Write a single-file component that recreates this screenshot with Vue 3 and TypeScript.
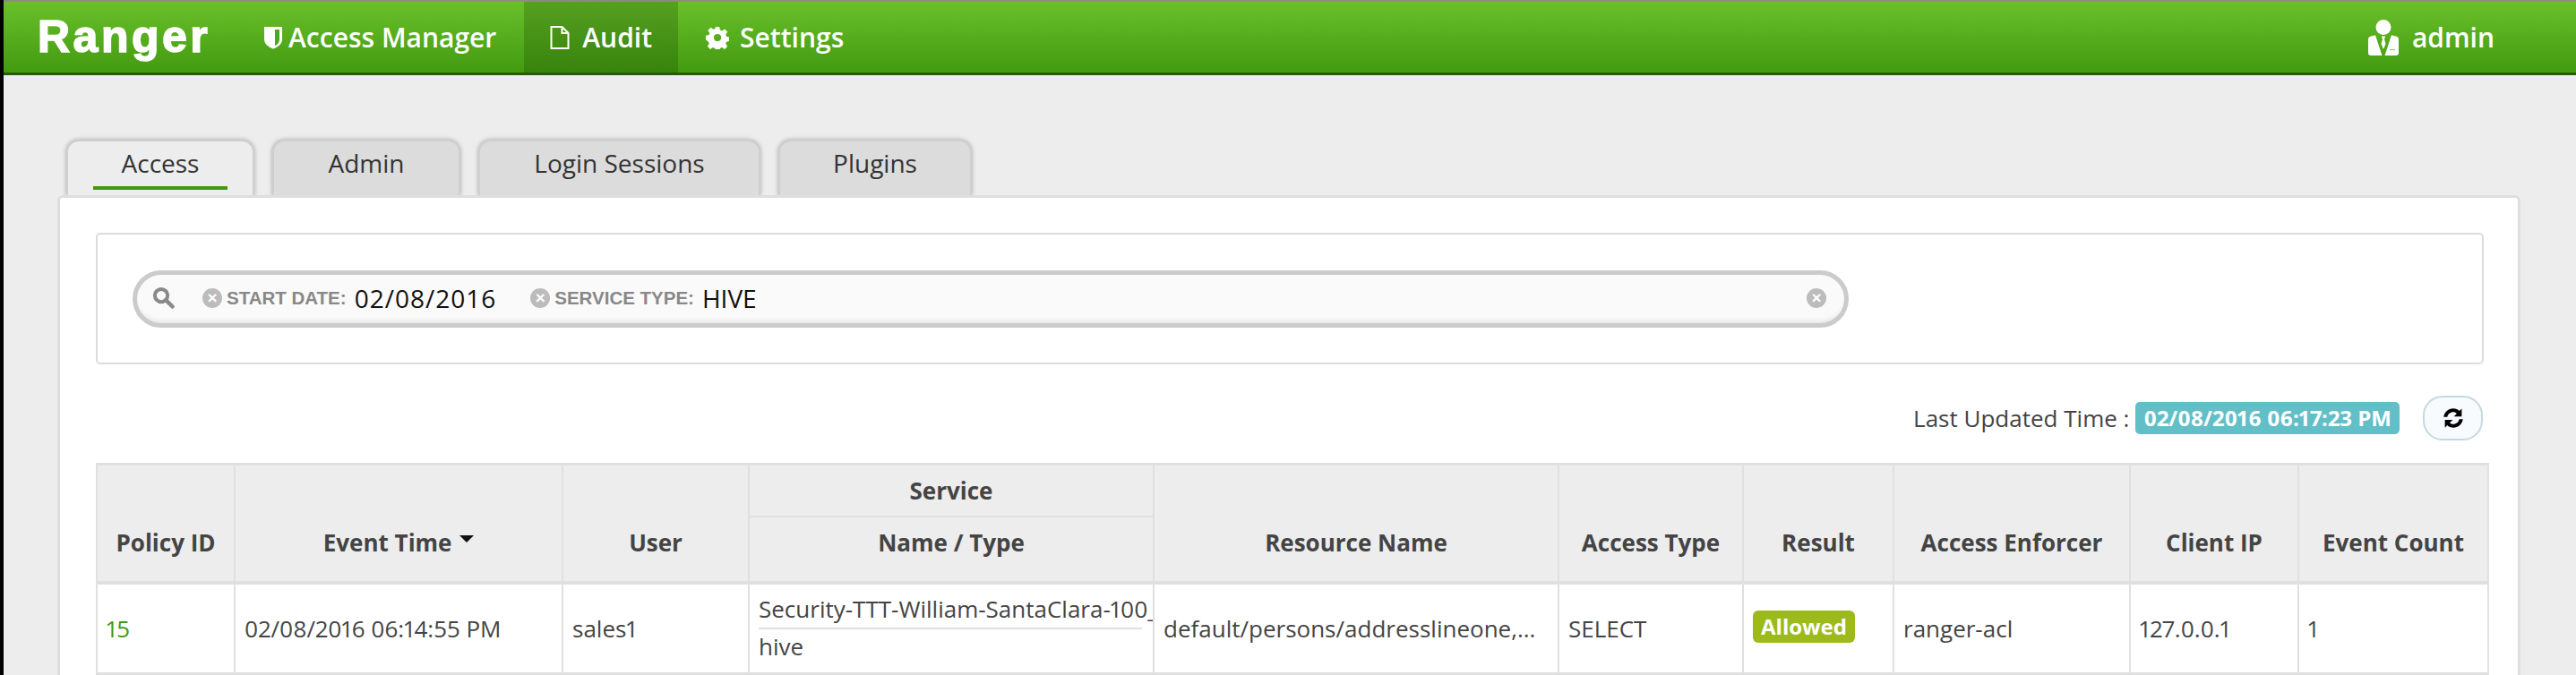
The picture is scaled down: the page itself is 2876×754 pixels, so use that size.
<script setup lang="ts">
const tabs = ['Access', 'Admin', 'Login Sessions', 'Plugins']
</script>

<template>
  <div class="page">
    <nav class="navbar">
      <span class="brand">Ranger</span>
      <a class="item manager">
        <svg class="ic-shield" viewBox="0 0 22 26"><path d="M1 1h20v14c0 5-4.500 8.500-10 10.500C5.500 23.500 1 20 1 15z" fill="#fff"/><path d="M13 4h5v11c0 3.500-2.200 5.800-5 7.300z" fill="#4fa81c"/></svg>
        <span>Access Manager</span>
      </a>
      <a class="item active">
        <svg class="ic-file" viewBox="0 0 22 26"><path d="M1.500 1h12l7 7v17h-19z M13.500 1v7h7" fill="none" stroke="#fff" stroke-width="2"/></svg>
        <span>Audit</span>
      </a>
      <a class="item settings">
        <svg class="ic-gear" viewBox="0 0 24 24"><path fill="#fff" fill-rule="evenodd" d="M10 1h4l.7 3.200 2 .9 2.800-1.800 2.800 2.800-1.800 2.800.8 2 3.200.7v4l-3.200.7-.8 2 1.800 2.800-2.800 2.800-2.800-1.800-2 .8-.7 3.200h-4l-.7-3.200-2-.8-2.800 1.800-2.800-2.800 1.800-2.800-.8-2L0 14v-4l3.200-.7.800-2-1.800-2.800L5 1.700l2.800 1.800 2-.8zM12 8.200a3.800 3.800 0 1 0 0 7.600 3.800 3.800 0 0 0 0-7.600z"/></svg>
        <span>Settings</span>
      </a>
      <span class="user">
        <svg class="ic-user" viewBox="0 0 34 40"><circle cx="17" cy="8.500" r="8.500" fill="#fff"/><path fill="#fff" d="M0 22q0-3 3-3.500l5-1.200L15.500 40H3q-3 0-3-3z"/><path fill="#fff" d="M34 22q0-3-3-3.500l-5-1.200L18.500 40H31q3 0 3-3z"/><path fill="#fff" d="M14.700 18.500h4.600l-1.300 3 1.500 5.500-2.500 6-2.500-6 1.500-5.500z"/><rect x="24" y="33" width="6" height="1.200" fill="#8fcf6a"/></svg>
        <span>admin</span>
      </span>
    </nav>

    <div class="content">
      <ul class="tabs">
        <li v-for="(t, i) in tabs" :key="t" class="tab" :class="{ on: i === 0 }">
          <span class="tab-label">{{ t }}</span>
        </li>
      </ul>
      <section class="panel">
        <div class="filter-box">
          <div class="search">
            <svg class="ic-search" viewBox="0 0 20 20"><circle cx="8" cy="8" r="5.700" fill="none" stroke="#8a8a8a" stroke-width="3.200"/><path d="M12.300 12.300l5.700 5.700" stroke="#8a8a8a" stroke-width="3.600" stroke-linecap="round"/></svg>
            <span class="facet">
              <i class="x">×</i><span class="cat">START DATE:</span><span class="val date">02/08/2016</span>
            </span>
            <span class="facet second">
              <i class="x">×</i><span class="cat">SERVICE TYPE:</span><span class="val">HIVE</span>
            </span>
            <i class="x clear">×</i>
          </div>
        </div>
        <div class="updated">
          <span>Last Updated Time :</span>
          <span class="time">02/08/2016 06:17:23 PM</span>
          <button class="refresh">
            <svg viewBox="0 0 24 24" width="30" height="30"><path fill="#000" d="M19.500 3.500v7h-7l2.600-2.600C14.200 7 13.200 6.600 12 6.600c-2.600 0-4.800 1.800-5.300 4.400H3.400C4 6.600 7.600 3.400 12 3.400c2.100 0 4 .8 5.400 2.200zM4.500 20.500v-7h7l-2.600 2.600c.9.900 1.900 1.300 3.100 1.300 2.600 0 4.800-1.800 5.300-4.400h3.300c-.6 4.400-4.200 7.600-8.600 7.600-2.100 0-4-.8-5.400-2.200z"/></svg>
          </button>
        </div>
        <table class="grid">
          <colgroup>
            <col class="c1"/><col class="c2"/><col class="c3"/><col class="c4"/><col class="c4"/><col class="c6"/><col class="c7"/><col class="c8"/><col class="c9"/><col class="c10"/>
          </colgroup>
          <thead>
            <tr class="r1">
              <th rowspan="2">Policy ID</th>
              <th rowspan="2">Event Time <span class="caret"></span></th>
              <th rowspan="2">User</th>
              <th class="svc">Service</th>
              <th rowspan="2">Resource Name</th>
              <th rowspan="2">Access Type</th>
              <th rowspan="2">Result</th>
              <th rowspan="2">Access Enforcer</th>
              <th rowspan="2">Client IP</th>
              <th rowspan="2">Event Count</th>
            </tr>
            <tr class="r2"><th>Name / Type</th></tr>
          </thead>
          <tbody>
            <tr>
              <td class="link">15</td>
              <td>02/08/2016 06:14:55 PM</td>
              <td>sales1</td>
              <td class="svc-cell">
                <div class="svc-name">Security-TTT-William-SantaClara-100_hadoop</div>
                <div class="svc-type">hive</div>
              </td>
              <td>default/persons/addresslineone,...</td>
              <td>SELECT</td>
              <td><span class="allowed">Allowed</span></td>
              <td>ranger-acl</td>
              <td>127.0.0.1</td>
              <td>1</td>
            </tr>
          </tbody>
        </table>
      </section>
    </div>
  </div>
</template>

<style>
html, body { margin: 0; padding: 0; background: #ededed; overflow: hidden; }
</style>

<style scoped>
.page {
  width: 2876px;
  height: 754px;
  overflow: hidden;
  background: #ededed;
  font-family: "Open Sans", sans-serif;
  font-variant-numeric: proportional-nums;
  color: #444;
  border-left: 4px solid #000;
  box-sizing: border-box;
}
.navbar {
  height: 84px;
  box-sizing: border-box;
  border-top: 2px solid #8a8a8a;
  border-bottom: 3px solid #235c0a;
  background: linear-gradient(#6ac02a, #429a10);
  display: flex;
  align-items: stretch;
  color: #fff;
  font-size: 30px;
  font-weight: 600;
}
.brand {
  font-family: "Liberation Sans", sans-serif;
  font-size: 50px;
  font-weight: 700;
  letter-spacing: 3.500px;
  -webkit-text-stroke: 1.500px #fff;
  margin-left: 38px;
  width: 252px;
  line-height: 78px;
}
.item { display: flex; align-items: center; }
.manager { gap: 6px; padding-right: 31px; }
.item.active { background: linear-gradient(#56a020, #37840d); padding: 0 29px; gap: 14px; }
.settings { padding-left: 31px; gap: 12px; }
.ic-shield { width: 22px; height: 26px; }
.ic-file { width: 22px; height: 26px; }
.ic-gear { width: 26px; height: 26px; }
.user { margin-left: auto; margin-right: 91px; display: flex; align-items: center; gap: 15px; }
.ic-user { width: 34px; height: 40px; }
.content { padding: 72px 0 0 60px; }
.tabs {
  list-style: none;
  display: flex;
  margin: 0 0 0 10px;
  padding: 0;
  gap: 20px;
  height: 62px;
}
.tab {
  background: #dcdcdc;
  border: 2px solid #cfcfcf;
  border-bottom: 0;
  border-radius: 14px 14px 0 0;
  box-shadow: 0 0 5px rgba(0,0,0,.3);
  width: 210px;
  font-size: 28px;
  color: #333;
  text-align: center;
  line-height: 48px;
  height: 62px;
  box-sizing: border-box;
}
.tab:nth-child(3) { width: 315px; }
.tab:nth-child(4) { width: 216px; }
.tab.on { background: #ededed; padding: 0 28px; }
.tab-label { display: block; }
.tab.on .tab-label { border-bottom: 4px solid #429a10; height: 50px; }
.panel {
  position: relative;
  width: 2750px;
  height: 540px;
  box-sizing: border-box;
  background: #fff;
  border: 3px solid #dedede;
  border-radius: 6px 6px 0 0;
  padding: 39px 38px 0 40px;
}
.filter-box {
  height: 147px;
  box-sizing: border-box;
  border: 2px solid #dcdcdc;
  border-radius: 5px;
  padding: 40px 0 0 39px;
}
.search {
  width: 1916px;
  height: 64px;
  box-sizing: border-box;
  border: 5px solid #cbcbcb;
  border-radius: 32px;
  background: #fafafa;
  box-shadow: inset 0 -6px 6px -5px rgba(0,0,0,.12);
  display: flex;
  align-items: center;
  padding: 0 20px 3px 17px;
}
.ic-search { width: 25px; height: 25px; margin-right: 31px; }
.facet { display: flex; align-items: center; }
.second { margin-left: 38px; }
.x {
  display: inline-block;
  width: 22px;
  height: 22px;
  border-radius: 50%;
  background: #bcbcbc;
  color: #fff;
  font: 700 19px/22px "Liberation Sans", sans-serif;
  text-align: center;
  margin-right: 5px;
}
.clear { margin-left: auto; margin-right: 0; }
.cat { font: 700 20.500px "Liberation Sans", sans-serif; color: #888; margin-right: 9px; }
.val { font-size: 28px; color: #111; }
.date { letter-spacing: 1px; font-variant-numeric: tabular-nums; }
.updated {
  display: flex;
  justify-content: flex-end;
  align-items: center;
  height: 58px;
  margin-top: 31px;
  font-size: 26px;
  color: #444;
  gap: 7px;
  padding-right: 1px;
}
.time {
  background: #62bfc8;
  color: #fff;
  font-weight: 700;
  font-size: 24px;
  border-radius: 5px;
  height: 36px;
  line-height: 36px;
  padding: 0 9px;
  box-sizing: border-box;
}
.refresh {
  width: 67px;
  height: 50px;
  margin-left: 19px;
  border: 2px solid #c5d8e0;
  border-radius: 22px;
  background: #f7fbfd;
  display: flex;
  align-items: center;
  justify-content: center;
  padding: 0;
}
.grid {
  margin-top: 21px;
  width: 2670px;
  table-layout: fixed;
  border-collapse: collapse;
  font-size: 26px;
  color: #444;
}
.c1 { width: 154px; }
.c2 { width: 366px; }
.c3 { width: 208px; }
.c4 { width: 452px; }
.c6 { width: 206px; }
.c7 { width: 168px; }
.c8 { width: 264px; }
.c9 { width: 188px; }
.c10 { width: 212px; }
th, td { border: 2px solid #e0e0e0; }
thead { border-top: 3px solid #e0e0e0; }
th {
  background: #ededed;
  font-weight: 700;
  font-size: 26px;
  text-align: center;
  vertical-align: middle;
  color: #444;
  padding: 0;
}
.r1 th { height: 56px; }
.r2 th { height: 46px; vertical-align: bottom; padding-bottom: 25px; }
th[rowspan] { vertical-align: bottom; padding-bottom: 25px; border-bottom: 4px solid #e0e0e0; height: auto; }
thead tr:last-child th { border-bottom: 4px solid #e0e0e0; }
.caret {
  display: inline-block;
  border-left: 8px solid transparent;
  border-right: 8px solid transparent;
  border-top: 8px solid #111;
  vertical-align: 10px;
  margin-left: 2px;
}
td {
  height: 98px;
  padding: 0 10px;
  text-align: left;
  white-space: nowrap;
  overflow: hidden;
  border-bottom: 4px solid #e0e0e0;
}
.link { color: #429a10; }
.svc-cell { padding: 0 0 0 10px; }
.svc-name { overflow: hidden; height: 48px; box-sizing: border-box; padding-top: 8px; line-height: 38px; }
.svc-type { border-top: 2px solid #e0e0e0; margin-right: 12px; line-height: 38px; height: 48px; }
.allowed {
  display: inline-block;
  background: #9dba1d;
  color: #fff;
  font-weight: 700;
  font-size: 24px;
  line-height: 36px;
  height: 36px;
  padding: 0 9px;
  border-radius: 6px;
  position: relative;
  top: -3px;
}
</style>
